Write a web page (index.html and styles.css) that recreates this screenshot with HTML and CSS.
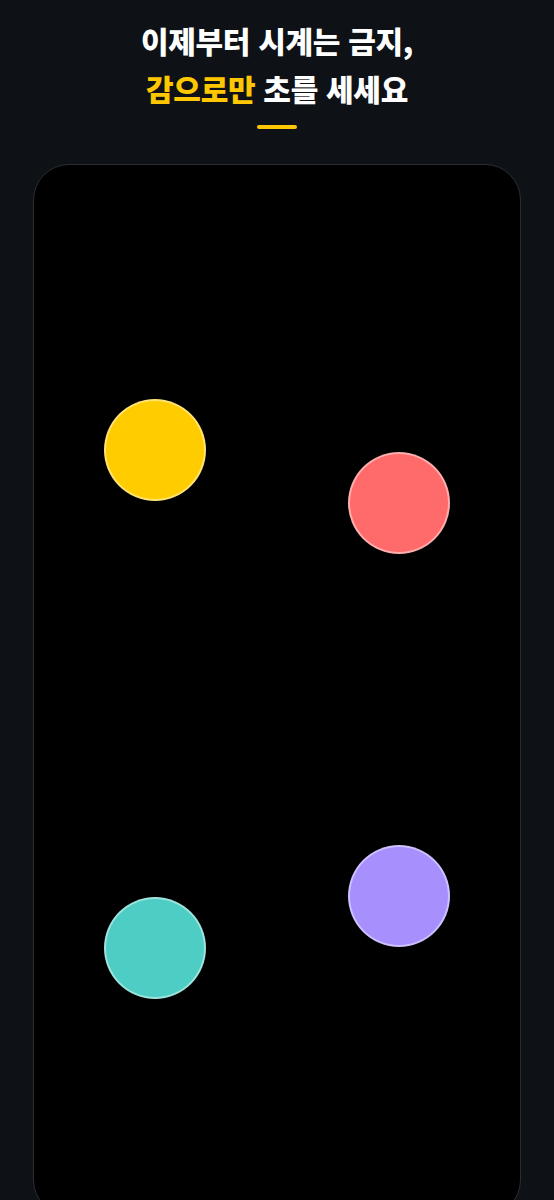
FILE: index.html
```html
<!DOCTYPE html>
<html lang="ko">
<head>
    <meta charset="UTF-8">
    <meta name="viewport" content="width=device-width, initial-scale=1.0">
    <title>감으로 초 세기</title>
    <link rel="stylesheet" href="styles.css">
</head>
<body>
    <div class="page">
        <!-- Heading -->
        <header class="intro">
            <h1 class="intro-title">
                이제부터 시계는 금지,<br>
                <span class="accent">감으로만</span> 초를 세세요
            </h1>
            <div class="intro-bar"></div>
        </header>

        <!-- Phone screen with the dots -->
        <div class="screen">
            <div class="dot dot-yellow" style="left: 70px; top: 234px;"></div>
            <div class="dot dot-red" style="left: 314px; top: 287px;"></div>
            <div class="dot dot-purple" style="left: 314px; top: 680px;"></div>
            <div class="dot dot-teal" style="left: 70px; top: 732px;"></div>
        </div>
    </div>
</body>
</html>
```

FILE: styles.css
```css
/* Page base */
body {
    margin: 0;
    background-color: #0e1116;
    font-family: "Noto Sans CJK KR", "Noto Sans", sans-serif;
    color: #fff;
}

.page {
    display: flex;
    flex-direction: column;
    align-items: center;
    padding-top: 16px;
    overflow: hidden;
    height: 1200px;
}

/* Heading */
.intro {
    display: flex;
    flex-direction: column;
    align-items: center;
}

.intro-title {
    margin: 0;
    font-size: 30px;
    font-weight: 900;
    line-height: 48px;
    text-align: center;
    letter-spacing: -0.3px;
}

.accent {
    color: #ffc700;
}

.intro-bar {
    width: 40px;
    height: 4px;
    margin-top: 13px;
    border-radius: 2px;
    background-color: #ffc700;
}

/* Phone screen */
.screen {
    position: relative;
    flex-shrink: 0;
    width: 488px;
    height: 1052px;
    margin-top: 35px;
    box-sizing: border-box;
    background-color: #000;
    border: 1px solid #2a2d33;
    border-radius: 36px;
}

/* Dots */
.dot {
    position: absolute;
    width: 102px;
    height: 102px;
    box-sizing: border-box;
    border-radius: 50%;
    border: 2px solid rgba(255, 255, 255, 0.45);
}

.dot-yellow {
    background-color: #ffcc00;
}

.dot-red {
    background-color: #ff6b6b;
}

.dot-purple {
    background-color: #a78ffd;
}

.dot-teal {
    background-color: #4ecdc4;
}
```
